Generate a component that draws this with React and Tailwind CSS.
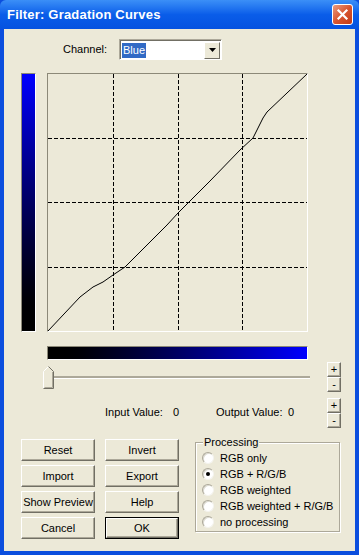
import React from 'react'

// --- small pieces ---

const CloseButton = () => (
  <div className="w-[21px] h-[21px] rounded-[3px] border border-white bg-gradient-to-br from-[#e99a7e] via-[#d8552f] to-[#c23a16] flex items-center justify-center">
    <svg width="13" height="13" viewBox="0 0 13 13">
      <path d="M2.5 2.5 L10.5 10.5 M10.5 2.5 L2.5 10.5" stroke="white" strokeWidth="2.2" strokeLinecap="square" />
    </svg>
  </div>
)

const Btn = ({ label, isDefault }) => (
  <div className={isDefault ? 'w-[74px] h-[22px] border border-black' : 'w-[74px] h-[22px]'}>
    <div className="w-full h-full flex items-center justify-center bg-[#ece9d8] border border-t-white border-l-white border-r-[#716f64] border-b-[#716f64] shadow-[inset_-1px_-1px_0_#aca899]">
      {label}
    </div>
  </div>
)

const SmallBtn = ({ label }) => (
  <div className="w-[14px] h-[15px] flex items-center justify-center bg-[#ece9d8] border border-t-white border-l-white border-r-[#716f64] border-b-[#716f64] shadow-[inset_-1px_-1px_0_#aca899] leading-none">
    {label}
  </div>
)

const Radio = ({ checked }) => (
  <span className="w-[12px] h-[12px] rounded-full bg-white border border-t-[#aca899] border-l-[#aca899] border-r-[#f4f3ee] border-b-[#f4f3ee] shadow-[inset_1px_1px_0_#dcdad0] flex items-center justify-center">
    {checked && <span className="w-[4px] h-[4px] rounded-full bg-black" />}
  </span>
)

const SliderThumb = () => (
  <svg className="absolute left-0 top-0" width="11" height="23" viewBox="0 0 11 23">
    <path d="M0.5 22.5 V5.5 L5.5 0.5 L10.5 5.5 V22.5 Z" fill="#ece9d8" />
    <path d="M0.5 22 V5.5 L5.5 0.5" fill="none" stroke="white" />
    <path d="M5.5 0.5 L10.5 5.5 V22.5 H0.5" fill="none" stroke="#716f64" />
    <path d="M9.5 6 V21.5 H1.5" fill="none" stroke="#aca899" />
  </svg>
)

// curve points, graph space 259 x 257
const curve = [
  [0, 257], [32, 223], [45, 213], [55, 208], [65, 201], [77, 193], [92, 178],
  [109, 161], [119, 151], [130, 139], [162, 107], [192, 76], [205, 64],
  [210, 54], [215, 44], [219, 38], [259, 0],
]

const Graph = () => (
  <div className="w-[261px] h-[259px] border border-t-[#8c8978] border-l-[#8c8978] border-r-white border-b-white bg-[#ece9d8]">
    <svg width="259" height="257" viewBox="0 0 259 257" className="block">
      <g stroke="black" strokeWidth="1" strokeDasharray="4 2" shapeRendering="crispEdges">
        <line x1="65.5" y1="0" x2="65.5" y2="257" />
        <line x1="130.5" y1="0" x2="130.5" y2="257" />
        <line x1="194.5" y1="0" x2="194.5" y2="257" />
        <line x1="0" y1="64.5" x2="259" y2="64.5" />
        <line x1="0" y1="128.5" x2="259" y2="128.5" />
        <line x1="0" y1="193.5" x2="259" y2="193.5" />
      </g>
      <polyline points={curve.map(p => p.join(',')).join(' ')} fill="none" stroke="black" strokeWidth="1" />
    </svg>
  </div>
)

const options = ['RGB only', 'RGB + R/G/B', 'RGB weighted', 'RGB weighted + R/G/B', 'no processing']

export default function App() {
  return (
    <div className="w-[359px] h-[555px] bg-[#0b4ede] flex flex-col overflow-hidden text-[11px] text-black font-['Liberation_Sans',Arial,sans-serif]">
      {/* title bar */}
      <div className="h-[29px] shrink-0 flex items-center justify-between pl-[7px] pr-[6px] rounded-t-[6px] bg-gradient-to-b from-[#3b8ff7] via-[#0a5de9] to-[#0552e0]">
        <span className="text-white font-bold text-[13px] tracking-[0.2px]">Filter: Gradation Curves</span>
        <CloseButton />
      </div>

      {/* body */}
      <div className="flex-1 mx-[4px] mb-[4px] bg-[#ece9d8] flex flex-col">
        {/* channel */}
        <div className="flex items-center mt-[10px] pl-[59px] h-[21px]">
          <span className="w-[56px]">Channel:</span>
          <div className="w-[103px] h-[21px] flex items-center bg-white border border-t-[#aca899] border-l-[#aca899] border-r-white border-b-white shadow-[inset_1px_1px_0_#716f64]">
            <span className="ml-[2px] mt-[1px] px-[1px] h-[15px] flex items-center bg-[#316ac5] text-white">Blue</span>
            <div className="ml-auto mr-[1px] mt-[1px] w-[16px] h-[17px] flex items-center justify-center bg-[#ece9d8] border border-t-white border-l-white border-r-[#716f64] border-b-[#716f64]">
              <svg width="7" height="4" viewBox="0 0 7 4"><path d="M0 0 H7 L3.5 4 Z" fill="black" /></svg>
            </div>
          </div>
        </div>

        {/* gradient + graph */}
        <div className="flex mt-[13px] pl-[17px] gap-[11px]">
          <div className="w-[15px] h-[259px] border border-t-[#8c8978] border-l-[#8c8978] border-r-white border-b-white">
            <div className="w-full h-full bg-gradient-to-b from-[#0000ff] to-black" />
          </div>
          <Graph />
        </div>

        {/* horizontal gradient */}
        <div className="mt-[14px] ml-[43px] w-[261px] h-[14px] border border-t-[#8c8978] border-l-[#8c8978] border-r-white border-b-white">
          <div className="w-full h-full bg-gradient-to-r from-black to-[#0000ff]" />
        </div>

        {/* slider + values + spin buttons */}
        <div className="flex">
          <div className="flex flex-col ml-[39px] w-[272px]">
            <div className="relative mt-[6px] h-[23px] w-[268px]">
              <div className="mt-[10px] ml-[5px] w-[262px] h-[3px] border-t-2 border-t-[#aca899] border-b border-b-white" />
              <SliderThumb />
            </div>
            <div className="flex items-center mt-[16px] ml-[62px] h-[14px]">
              <span className="w-[68px]">Input Value:</span>
              <span className="w-[43px]">0</span>
              <span className="w-[72px]">Output Value:</span>
              <span>0</span>
            </div>
          </div>
          <div className="flex flex-col ml-[12px] mt-[2px]">
            <SmallBtn label="+" />
            <SmallBtn label="-" />
            <div className="h-[6px]" />
            <SmallBtn label="+" />
            <SmallBtn label="-" />
          </div>
        </div>

        {/* buttons + processing */}
        <div className="flex items-start mt-[11px] pl-[17px]">
          <div className="grid grid-cols-2 gap-x-[10px] gap-y-[4px]">
            <Btn label="Reset" />
            <Btn label="Invert" />
            <Btn label="Import" />
            <Btn label="Export" />
            <Btn label="Show Preview" />
            <Btn label="Help" />
            <Btn label="Cancel" />
            <Btn label="OK" isDefault />
          </div>
          <fieldset className="ml-[16px] -mt-[3px] w-[145px] border border-[#aca899] shadow-[inset_1px_1px_0_white,1px_1px_0_white] pl-[6px] pb-[1px]">
            <legend className="ml-[1px] px-[1px] leading-[13px] bg-[#ece9d8]">Processing</legend>
            <div className="flex flex-col pt-[1px]">
              {options.map((o, i) => (
                <div key={o} className="h-[16px] flex items-center gap-[6px]">
                  <Radio checked={i === 1} />
                  <span>{o}</span>
                </div>
              ))}
            </div>
          </fieldset>
        </div>
      </div>
    </div>
  )
}
